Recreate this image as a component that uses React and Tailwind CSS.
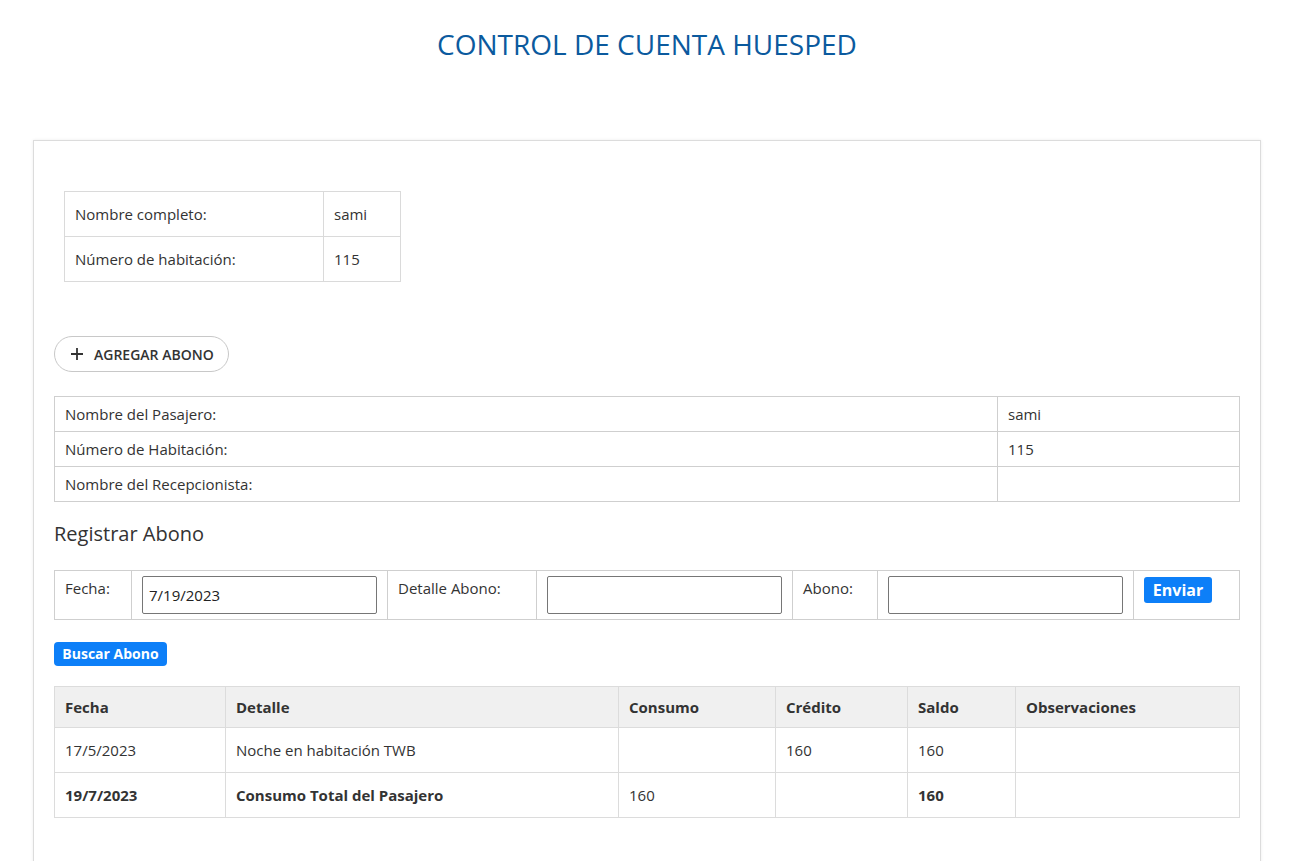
import React from "react";

const font = { fontFamily: '"Open Sans", "Noto Sans", sans-serif' };

function Plus() {
  return (
    <svg width="14" height="14" viewBox="0 0 14 14" fill="none" stroke="#333" strokeWidth="1.8">
      <path d="M7 1v12M1 7h12" />
    </svg>
  );
}

export default function App() {
  return (
    <div className="min-h-[861px] bg-white text-[#333]" style={font}>
      <div className="ml-[33px] w-[1228px]">
        <h1 className="pt-[25px] text-center text-[28px] leading-[38px] text-[#0b5a9e] font-normal">
          CONTROL DE CUENTA HUESPED
        </h1>
        <div className="mt-[77px] border border-[#dcdcdc] shadow-[0_0_3px_rgba(0,0,0,0.08)] px-[20px] pt-[50px] pb-[44px] min-h-[730px]">
          <table className="ml-[10px] border-collapse text-[15px]">
            <tbody>
              <tr className="h-[45px]">
                <td className="border border-[#dadada] px-[10px] w-[259px]">Nombre completo:</td>
                <td className="border border-[#dadada] px-[10px] w-[77px]">sami</td>
              </tr>
              <tr className="h-[45px]">
                <td className="border border-[#dadada] px-[10px]">Número de habitación:</td>
                <td className="border border-[#dadada] px-[10px]">115</td>
              </tr>
            </tbody>
          </table>

          <button className="mt-[54px] flex h-[36px] w-[175px] items-center gap-[10px] rounded-full border border-[#c8c8c8] pl-[15px] text-[14px] font-semibold text-[#333]">
            <Plus />
            <span>AGREGAR ABONO</span>
          </button>

          <table className="mt-[24px] w-full border-collapse text-[15px]">
            <tbody>
              <tr className="h-[35px]">
                <td className="border border-[#cfcfcf] px-[10px]">Nombre del Pasajero:</td>
                <td className="border border-[#cfcfcf] px-[10px] w-[242px]">sami</td>
              </tr>
              <tr className="h-[35px]">
                <td className="border border-[#cfcfcf] px-[10px]">Número de Habitación:</td>
                <td className="border border-[#cfcfcf] px-[10px]">115</td>
              </tr>
              <tr className="h-[35px]">
                <td className="border border-[#cfcfcf] px-[10px]">Nombre del Recepcionista:</td>
                <td className="border border-[#cfcfcf] px-[10px]"></td>
              </tr>
            </tbody>
          </table>

          <h2 className="mt-[18px] text-[20px] leading-[28px] text-[#333]">Registrar Abono</h2>

          <table className="mt-[22px] w-full border-collapse text-[15px] table-fixed">
            <tbody>
              <tr className="h-[49px]">
                <td className="border border-[#cfcfcf] px-[10px] align-top pt-[6px] w-[77px]">Fecha:</td>
                <td className="border border-[#cfcfcf] px-[10px] w-[256px]">
                  <div className="flex h-[38px] w-[235px] items-center rounded-[2px] border border-[#767676] px-[6px] text-[15px] text-[#222]">7/19/2023</div>
                </td>
                <td className="border border-[#cfcfcf] px-[10px] align-top pt-[6px] w-[149px]">Detalle Abono:</td>
                <td className="border border-[#cfcfcf] px-[10px] w-[256px]">
                  <div className="h-[38px] w-[235px] rounded-[2px] border border-[#767676]"></div>
                </td>
                <td className="border border-[#cfcfcf] px-[10px] align-top pt-[6px] w-[85px]">Abono:</td>
                <td className="border border-[#cfcfcf] px-[10px] w-[256px]">
                  <div className="h-[38px] w-[235px] rounded-[2px] border border-[#767676]"></div>
                </td>
                <td className="border border-[#cfcfcf] px-[10px] align-top pt-[6px]">
                  <button className="h-[26px] w-[68px] rounded-[3px] bg-[#0d7ff8] text-[16px] font-bold leading-[26px] text-white">Enviar</button>
                </td>
              </tr>
            </tbody>
          </table>

          <button className="mt-[22px] h-[24px] w-[113px] rounded-[4px] bg-[#0d7ff8] text-[14px] font-bold leading-[24px] text-white">Buscar Abono</button>

          <table className="mt-[20px] w-full border-collapse text-[15px] table-fixed">
            <thead>
              <tr className="h-[41px] bg-[#f0f0f0] text-left">
                <th className="border border-[#dcdcdc] px-[10px] font-bold w-[171px]">Fecha</th>
                <th className="border border-[#dcdcdc] px-[10px] font-bold w-[393px]">Detalle</th>
                <th className="border border-[#dcdcdc] px-[10px] font-bold w-[157px]">Consumo</th>
                <th className="border border-[#dcdcdc] px-[10px] font-bold w-[132px]">Crédito</th>
                <th className="border border-[#dcdcdc] px-[10px] font-bold w-[108px]">Saldo</th>
                <th className="border border-[#dcdcdc] px-[10px] font-bold">Observaciones</th>
              </tr>
            </thead>
            <tbody>
              <tr className="h-[45px]">
                <td className="border border-[#dcdcdc] px-[10px]">17/5/2023</td>
                <td className="border border-[#dcdcdc] px-[10px]">Noche en habitación TWB</td>
                <td className="border border-[#dcdcdc] px-[10px]"></td>
                <td className="border border-[#dcdcdc] px-[10px]">160</td>
                <td className="border border-[#dcdcdc] px-[10px]">160</td>
                <td className="border border-[#dcdcdc] px-[10px]"></td>
              </tr>
              <tr className="h-[45px]">
                <td className="border border-[#dcdcdc] px-[10px] font-bold">19/7/2023</td>
                <td className="border border-[#dcdcdc] px-[10px] font-bold">Consumo Total del Pasajero</td>
                <td className="border border-[#dcdcdc] px-[10px]">160</td>
                <td className="border border-[#dcdcdc] px-[10px]"></td>
                <td className="border border-[#dcdcdc] px-[10px] font-bold">160</td>
                <td className="border border-[#dcdcdc] px-[10px]"></td>
              </tr>
            </tbody>
          </table>
        </div>
      </div>
    </div>
  );
}
